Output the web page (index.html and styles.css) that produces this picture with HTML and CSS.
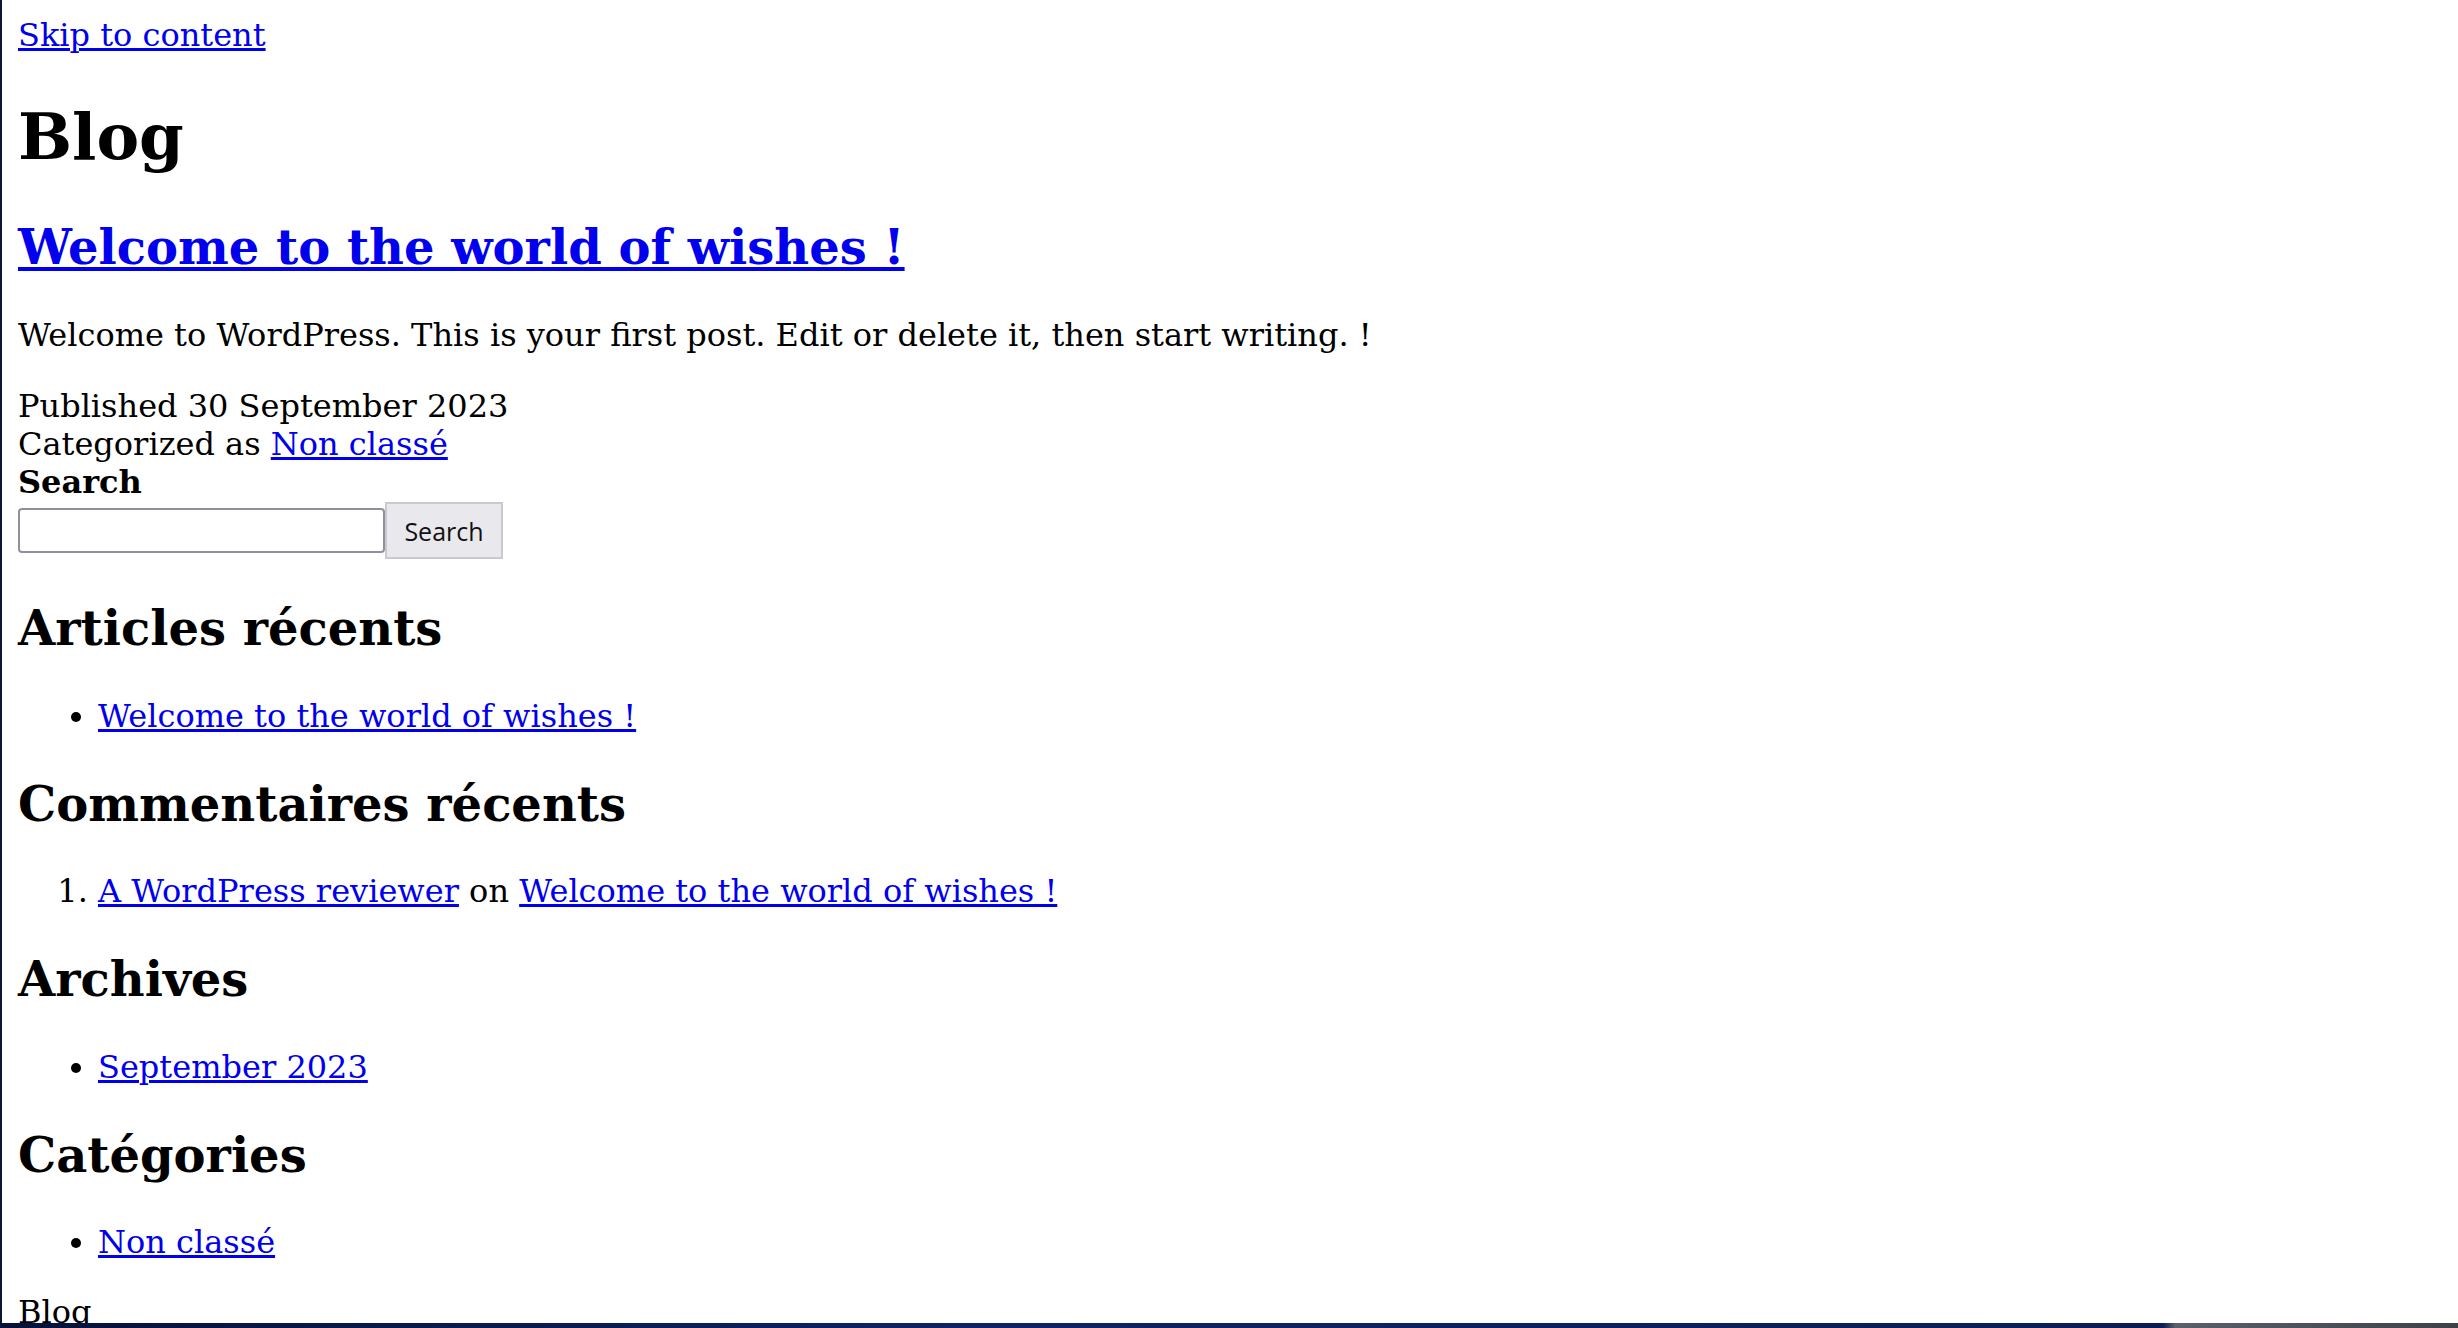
FILE: index.html
```html
<!DOCTYPE html>
<html lang="fr">
<head>
<meta charset="utf-8">
<title>Blog</title>
<link rel="stylesheet" href="styles.css">
</head>
<body class="page">
<div class="site">
  <a class="skip-link" href="#content">Skip to content</a>
  <header class="site-header">
    <h1 class="site-title">Blog</h1>
  </header>
  <main id="content" class="site-main">
    <article class="post">
      <h2 class="entry-title"><a href="#">Welcome to the world of wishes !</a></h2>
      <p class="entry-content">Welcome to WordPress. This is your first post. Edit or delete it, then start writing. !</p>
      <footer class="entry-footer">
        <div class="posted-on">Published 30 September 2023</div>
        <div class="cat-links">Categorized as <a href="#">Non classé</a></div>
      </footer>
    </article>
  </main>
  <aside class="widget-area">
    <form class="search-form" role="search">
      <label class="search-label" for="s">Search</label>
      <div class="search-row">
        <input class="search-input" id="s" type="search">
        <button class="search-button" type="submit">Search</button>
      </div>
    </form>
    <section class="widget">
      <h2 class="widget-title">Articles récents</h2>
      <ul class="widget-list">
        <li><a href="#">Welcome to the world of wishes !</a></li>
      </ul>
    </section>
    <section class="widget">
      <h2 class="widget-title">Commentaires récents</h2>
      <ol class="widget-list">
        <li><a href="#">A WordPress reviewer</a> on <a href="#">Welcome to the world of wishes !</a></li>
      </ol>
    </section>
    <section class="widget">
      <h2 class="widget-title">Archives</h2>
      <ul class="widget-list">
        <li><a href="#">September 2023</a></li>
      </ul>
    </section>
    <section class="widget">
      <h2 class="widget-title">Catégories</h2>
      <ul class="widget-list">
        <li><a href="#">Non classé</a></li>
      </ul>
    </section>
  </aside>
  <footer class="site-footer">Blog</footer>
</div>
<div class="desktop-edge"></div>
</body>
</html>
```
FILE: styles.css
```css
html {
  background: #ffffff;
}
.page {
  margin: 0;
  border-left: 2px solid #0b1633;
  min-height: 1328px;
  box-sizing: border-box;
  font-family: "DejaVu Serif", serif;
  font-size: 32px;
  color: #000;
}
.site {
  padding: 16px 16px 0 16px;
}
a {
  color: #0000ee;
}
.skip-link {
  display: inline-block;
}
.site-title {
  font-size: 64px;
  margin: 45px 0 0 0;
}
.entry-title {
  font-size: 48px;
  margin: 45px 0 0 0;
}
.entry-content {
  margin: 41px 0 33px 0;
}
.entry-footer {
  margin: 0;
}
.search-form {
  margin: 0;
}
.search-label {
  display: block;
  font-weight: bold;
}
.search-row {
  display: flex;
  align-items: center;
  margin-top: 1px;
}
.search-input {
  width: 367px;
  height: 45px;
  box-sizing: border-box;
  border: 2px solid #8f8f9d;
  border-radius: 4px;
  background: #fff;
  margin: 0;
  padding: 0 4px;
}
.search-button {
  width: 118px;
  height: 57px;
  box-sizing: border-box;
  border: 2px solid #c9c9cf;
  border-radius: 0;
  background: #e9e9ed;
  font-family: "Open Sans", sans-serif;
  font-size: 25px;
  color: #111;
  margin: 0;
  padding: 0;
}
.widget-title {
  font-size: 48px;
  margin: 41px 0 40.5px 0;
}
.widget-list {
  margin: 32px 0;
  padding-left: 80px;
}
.site-footer {
  margin-top: 0;
}
.desktop-edge {
  position: fixed;
  left: 0;
  right: 0;
  bottom: 0;
  height: 5px;
  background: linear-gradient(90deg, #06123a 0%, #0c2466 40%, #0a1d55 88%, #5a6068 88.5%, #3c4248 100%);
}
```
